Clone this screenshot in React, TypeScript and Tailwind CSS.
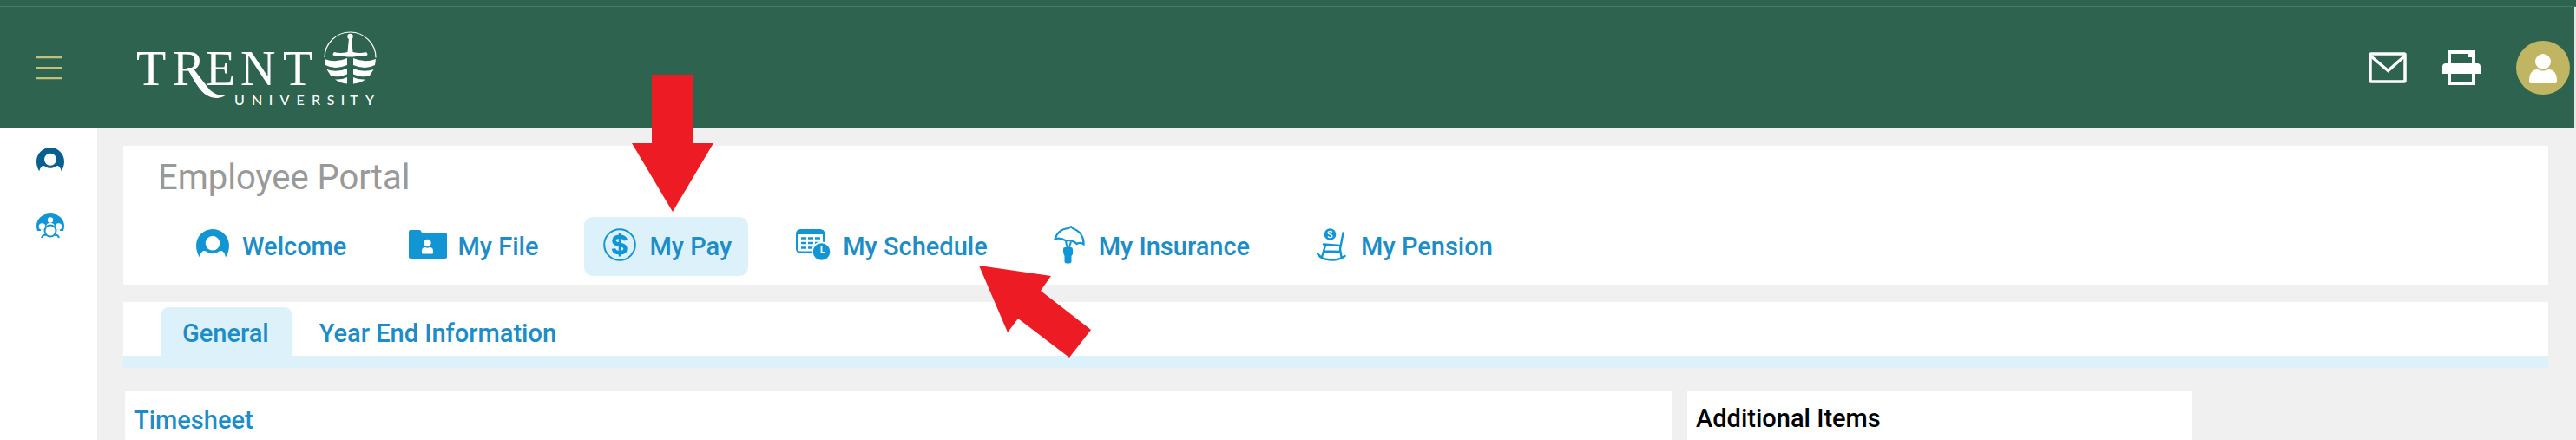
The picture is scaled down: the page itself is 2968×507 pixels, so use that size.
import React from 'react';

type IconProps = { className?: string };

const PersonIcon: React.FC<IconProps> = ({ className }) => (
  <svg viewBox="0 0 38 36" className={className} fill="currentColor">
    <path
      fillRule="evenodd"
      d="M19 0C8.500 0 0 8.500 0 19C0 24 1.600 29 4 32.500C4.500 29 6 26.500 8 25.200C10 24.600 12 25.800 13 26.600C16.500 28.800 21.500 28.800 25 26.600C26 25.800 28 24.600 30 25.200C32 26.500 33.500 29 34 32.500C36.400 29 38 24 38 19C38 8.500 29.500 0 19 0ZM19 8A8.300 8.300 0 1 1 19 24.600A8.300 8.300 0 1 1 19 8Z"
    />
  </svg>
);

const TeamIcon: React.FC<IconProps> = ({ className }) => (
  <svg viewBox="0 0 32 29" className={className}>
    <path d="M1 20C-3 8 6 0 16 0S35 8 31 20Z" fill="currentColor" />
    <g fill="#fff">
      <circle cx="16" cy="7.500" r="3.200" />
      <circle cx="6.500" cy="15" r="3.800" />
      <circle cx="25.500" cy="15" r="3.800" />
      <path d="M12 12c2-1.500 6-1.500 8 0l2 9H10zM5 18.500h22v3H5z" />
    </g>
    <circle cx="16" cy="20" r="6.500" fill="#fff" stroke="currentColor" strokeWidth="2" />
    <path d="M6 28c1-3 3-3.500 5-3M26 28c-1-3-3-3.500-5-3" fill="none" stroke="currentColor" strokeWidth="2" />
  </svg>
);

const FolderIcon: React.FC<IconProps> = ({ className }) => (
  <svg viewBox="0 0 44 34" className={className}>
    <path d="M2 0H12Q14 0 14.500 2L15 3H42Q44 3 44 5V31Q44 33 42 33H2Q0 33 0 31V2Q0 0 2 0Z" fill="currentColor" />
    <circle cx="21.500" cy="15" r="4.200" fill="#fff" />
    <path d="M15 26.500V24Q15 20 19 20Q21.500 21.300 24 20Q28 20 28 24V26.500Q28 27.500 27 27.500H16Q15 27.500 15 26.500Z" fill="#fff" />
  </svg>
);

const DollarIcon: React.FC<IconProps> = ({ className }) => (
  <svg viewBox="0 0 38 38" className={className} fill="none" stroke="currentColor">
    <circle cx="19" cy="19" r="17.800" strokeWidth="2" />
    <path d="M26 14C25 10.500 22 9.800 19 9.800C15 9.800 12.500 11.500 12.500 14.500C12.500 20.500 25.500 17 25.500 23.500C25.500 27 22.500 28.200 19 28.200C15.500 28.200 12.500 27 12 23.500" strokeWidth="4.500" />
    <path d="M19 5.500V32.500" strokeWidth="2.500" />
  </svg>
);

const ScheduleIcon: React.FC<IconProps> = ({ className }) => (
  <svg viewBox="0 0 40 36" className={className}>
    <rect x="1.200" y="1.200" width="31" height="25.600" rx="4" fill="none" stroke="currentColor" strokeWidth="2.400" />
    <path d="M1 6V4Q1 1 4 1H29.500Q32.500 1 32.500 4V6Z" fill="currentColor" />
    <path d="M6 10.500H28M6 16H28M6 21.500H28" fill="none" stroke="currentColor" strokeWidth="2.600" strokeDasharray="6 2" />
    <circle cx="29.500" cy="26" r="11.500" fill="#fff" />
    <circle cx="29.500" cy="26" r="9.800" fill="currentColor" />
    <path d="M29.500 20V27H34" fill="none" stroke="#fff" strokeWidth="1.800" />
  </svg>
);

const UmbrellaIcon: React.FC<IconProps> = ({ className }) => (
  <svg viewBox="0 0 36 44" className={className}>
    <path
      d="M1.500 15.500C4 7.500 10 3.500 17 3L20 1.200L22.500 3.500C30 6 35 13 34.500 21.500C32 19.500 29 19.500 26.500 21C23.500 18 19 16.500 14.500 17.500C10 14.800 5 14 1.500 15.500Z"
      fill="none"
      stroke="currentColor"
      strokeWidth="2.200"
    />
    <path d="M14 18L15.500 25M20 18.500L18 25" stroke="currentColor" strokeWidth="2" />
    <path d="M11 27Q11 25 13 25H20Q22 25 22 28V33Q21 34 20.500 35V41Q20.500 43.500 18 43.500H15Q12.500 43.500 12.500 41V35Q11 32 11 30Z" fill="currentColor" />
  </svg>
);

const PensionIcon: React.FC<IconProps> = ({ className }) => (
  <svg viewBox="0 0 34 38" className={className}>
    <circle cx="15.500" cy="7" r="6.800" fill="currentColor" />
    <path d="M18 4.500C16 2.800 13 3.500 13 5.300C13 7.500 18 6.500 18 9C18 11 14.500 11.200 13 9.500" fill="none" stroke="#fff" strokeWidth="1.300" />
    <path d="M30.500 5.500L27 24L28.500 33M8 18.500L10 20L6 33M8 18.500L27 20M8.500 26.500L27 27M1.200 29.500Q4 34 10 35.500Q24 38.500 32.500 32" fill="none" stroke="currentColor" strokeWidth="2.400" strokeLinecap="round" />
  </svg>
);

const MenuIcon: React.FC<IconProps> = ({ className }) => (
  <svg viewBox="0 0 30 28" className={className} fill="currentColor">
    <path d="M0 1H30V3.300H0ZM0 13H30V15.300H0ZM0 25H30V27.300H0Z" />
  </svg>
);

const MailIcon: React.FC<IconProps> = ({ className }) => (
  <svg viewBox="0 0 44 36" className={className} fill="none" stroke="currentColor" strokeWidth="3.500">
    <rect x="2" y="2" width="40" height="32" rx="1" />
    <path d="M3 5L22.500 21.500L41 5" />
  </svg>
);

const PrintIcon: React.FC<IconProps> = ({ className }) => (
  <svg viewBox="0 0 44 40" className={className} fill="currentColor">
    <path fillRule="evenodd" d="M6 0H38V40H6ZM10 4V36H34V8H30V4Z" />
    <path d="M4 15H40Q44 15 44 19V27H0V19Q0 15 4 15Z" />
  </svg>
);

const AvatarIcon: React.FC<IconProps> = ({ className }) => (
  <svg viewBox="0 0 62 62" className={className}>
    <circle cx="31" cy="31" r="31" fill="#c0b562" />
    <circle cx="31" cy="24" r="9" fill="#fff" />
    <path d="M15 46.500Q15 33 25 33Q31 36 37 33Q47 33 47 46.500Q47 49 45 49H17Q15 49 15 46.500Z" fill="#fff" />
  </svg>
);

const TrentLogo: React.FC<IconProps> = ({ className }) => (
  <svg viewBox="0 -6 280 96" className={className} fill="#fff" role="img" aria-label="Trent University">
    <g fontFamily="'Liberation Serif', serif" fontSize="56">
      <text x="1" y="62">T</text>
      <text x="43" y="62">R</text>
      <text x="81" y="62">E</text>
      <text x="121" y="62">N</text>
      <text x="170" y="62">T</text>
    </g>
    <path d="M60 42C70 62 78 77 94 77C99 77 102 75 105 73C96 76 88 71 82 63L66 42Z" />
    <g fontFamily="Lato, sans-serif" fontSize="16" textAnchor="middle">
      <text x="120" y="85">U</text>
      <text x="140" y="85">N</text>
      <text x="156" y="85">I</text>
      <text x="172" y="85">V</text>
      <text x="190" y="85">E</text>
      <text x="208" y="85">R</text>
      <text x="225" y="85">S</text>
      <text x="239" y="85">I</text>
      <text x="252" y="85">T</text>
      <text x="270" y="85">Y</text>
    </g>
    <circle cx="247.500" cy="30.500" r="29.500" fill="none" stroke="#fff" strokeWidth="1.200" strokeDasharray="93 93" strokeDashoffset="93" />
    <circle cx="247.500" cy="6" r="3.200" />
    <path d="M246 8H249L250.500 24Q259 26 266 24Q269 27 266 28Q258 28 250.500 29.500H244.500Q237 28 229 28Q226 27 229 24Q236 26 244.500 24Z" />
    <path d="M218 32Q231 37 244 31V39Q230 45 219 39ZM277 32Q264 37 251 31V39Q265 45 276 39Z" />
    <path d="M220.500 44Q232 48 244 43V49.500Q234 54 225 51ZM274.500 44Q263 48 251 43V49.500Q261 54 270 51Z" />
    <path d="M230 55.500Q238 56 244 53V60.500Q236 60 230 55.500ZM265 55.500Q257 56 251 53V60.500Q259 60 265 55.500Z" />
  </svg>
);

const navItems = [
  { label: 'Welcome', icon: <PersonIcon className="w-[38px]" /> },
  { label: 'My File', icon: <FolderIcon className="w-[44px]" /> },
  { label: 'My Pay', icon: <DollarIcon className="w-[38px]" />, active: true },
  { label: 'My Schedule', icon: <ScheduleIcon className="w-[40px]" /> },
  { label: 'My Insurance', icon: <UmbrellaIcon className="w-[36px]" /> },
  { label: 'My Pension', icon: <PensionIcon className="w-[34px]" /> },
];

const Header: React.FC = () => (
  <header className="bg-[#2e644f]">
    <div className="h-2 border-b border-[#437b66]" />
    <div className="flex h-[140px] items-center justify-between border-r-2 border-[#dfe9e5] pl-[41px] pr-[5px]">
      <div className="flex items-center">
        <button type="button" aria-label="Menu" className="text-[#c3c178]">
          <MenuIcon className="w-[30px]" />
        </button>
        <a href="#" className="ml-[85px]">
          <TrentLogo className="w-[280px]" />
        </a>
      </div>
      <div className="flex items-center gap-[41px] text-white">
        <button type="button" aria-label="Messages">
          <MailIcon className="w-[44px]" />
        </button>
        <button type="button" aria-label="Print">
          <PrintIcon className="w-[44px]" />
        </button>
        <button type="button" aria-label="Account">
          <AvatarIcon className="w-[62px]" />
        </button>
      </div>
    </div>
  </header>
);

const Sidebar: React.FC = () => (
  <aside className="flex w-28 shrink-0 flex-col items-center gap-[46px] bg-white pl-1 pt-[22px]">
    <a href="#" aria-label="Employee" className="text-[#07608f]">
      <PersonIcon className="w-8" />
    </a>
    <a href="#" aria-label="Team" className="text-[#1296d3]">
      <TeamIcon className="w-8" />
    </a>
  </aside>
);

export default function App() {
  return (
    <div className="relative flex min-h-screen flex-col overflow-hidden bg-[#f0f0f0] font-['Roboto',sans-serif] text-[29px] font-medium leading-[34px]">
      <Header />
      <div className="flex flex-1">
        <Sidebar />
        <main className="flex min-w-0 flex-1 flex-col pl-[30px] pr-8 pt-5">
          <section className="bg-white pb-[10px] pl-10 pt-[13px]">
            <h1 className="text-[40px] font-normal leading-[48px] text-[#999]">Employee Portal</h1>
            <nav className="mt-[21px] flex gap-[34px] pl-[22px]">
              {navItems.map((item) => (
                <a
                  key={item.label}
                  href="#"
                  className={`flex h-[68px] items-center gap-3 whitespace-nowrap rounded-[10px] px-[19px] text-[#1c8dc6] ${
                    item.active ? 'bg-[#ddf1fa]' : ''
                  }`}
                >
                  <span className="flex w-11 justify-center pb-1 text-[#1296d3]">{item.icon}</span>
                  {item.label}
                </a>
              ))}
            </nav>
          </section>

          {/* Tabs */}
          <section className="mt-5 flex border-b-[14px] border-[#ddf1fa] bg-white pl-11 pt-[6px] text-[#1c8dc6]">
            <button type="button" className="h-14 rounded-t-lg bg-[#ddf1fa] pl-6 pr-[26px] pt-1">
              General
            </button>
            <button type="button" className="h-14 px-8 pt-1">
              Year End Information
            </button>
          </section>

          <div className="mt-[26px] flex flex-1 gap-[18px] pl-[2px]">
            <section className="w-[1782px] bg-white px-[10px] pt-[17px]">
              <h2 className="text-[#1c8dc6]">Timesheet</h2>
            </section>
            <section className="w-[582px] bg-white px-[10px] pt-[15px]">
              <h2 className="text-black">Additional Items</h2>
            </section>
          </div>
        </main>
      </div>

      {/* Callout arrows */}
      <svg viewBox="0 0 530 328" className="pointer-events-none absolute left-[728px] top-[86px] w-[530px]" fill="#ed1c24">
        <path d="M23 0H70V79H94L47 158L0 79H23Z" />
        <path d="M400 220L483 232L471 249L529 294L504 326L445 281L433 297Z" />
      </svg>
    </div>
  );
}
